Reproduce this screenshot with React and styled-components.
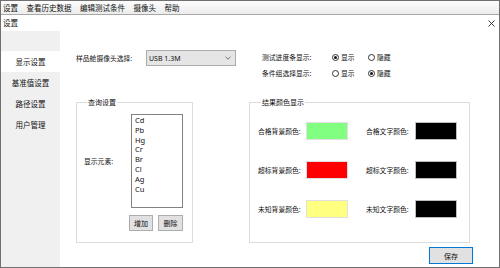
import React from 'react';
import styled, { createGlobalStyle } from 'styled-components';

const Global = createGlobalStyle`
  html, body { margin: 0; padding: 0; background: #fff; }
  body { font-family: "Noto Sans CJK SC", "Noto Sans", sans-serif; }
  * { box-sizing: border-box; }
`;

const Window = styled.div`
  width: 500px;
  height: 268px;
  border: 1px solid #707070;
  display: flex;
  flex-direction: column;
  background: #fff;
  overflow: hidden;
  font-size: 7.5px;
  line-height: 1;
  color: #111;
`;

const MenuBar = styled.div`
  height: 14px;
  flex: none;
  display: flex;
  align-items: center;
  gap: 8.5px;
  padding-left: 2px;
  background: linear-gradient(#fdfdfd, #ececec);
  border-bottom: 1px solid #a8a8a8;
`;

const MenuItem = styled.span`
  font-size: 7.5px;
`;

const TitleRow = styled.div`
  height: 16px;
  flex: none;
  display: flex;
  align-items: center;
  justify-content: space-between;
  padding: 0 4px 0 2px;
`;

const Body = styled.div`
  flex: 1;
  display: flex;
  min-height: 0;
`;

const Nav = styled.div`
  width: 59px;
  flex: none;
  background: #f0f0f0;
  padding-top: 20px;
  display: flex;
  flex-direction: column;
`;

const NavItem = styled.div`
  height: 21px;
  display: flex;
  align-items: center;
  justify-content: center;
  background: ${(p) => (p.$active ? '#fff' : 'transparent')};
`;

const Content = styled.div`
  flex: 1;
  display: flex;
  flex-direction: column;
  padding: 19px 0 0 16px;
  font-size: 6.8px;
`;

const TopRow = styled.div`
  display: flex;
  gap: 26px;
  height: 32px;
`;

const FieldRow = styled.div`
  display: flex;
  align-items: center;
  height: 16px;
`;

const Label = styled.span`
  width: ${(p) => p.$w}px;
  flex: none;
`;

const Select = styled.div`
  width: 90px;
  height: 16px;
  background: #e5e5e5;
  border: 1px solid #acacac;
  display: flex;
  align-items: center;
  justify-content: space-between;
  padding: 0 4px 0 2px;
  font-family: "Noto Sans", sans-serif;
  font-size: 7px;
`;

const RightCol = styled.div`
  display: flex;
  flex-direction: column;
  margin-top: -1px;
`;

const RadioOption = styled.label`
  width: 36px;
  display: flex;
  align-items: center;
  gap: 2px;
`;

const RadioCircle = styled.span`
  width: 7px;
  height: 7px;
  border-radius: 50%;
  border: 1px solid #333;
  display: flex;
  align-items: center;
  justify-content: center;
  &::after {
    content: '';
    width: 3px;
    height: 3px;
    border-radius: 50%;
    background: ${(p) => (p.$checked ? '#111' : 'transparent')};
  }
`;

const GroupsRow = styled.div`
  display: flex;
  gap: 56px;
  margin-top: 15px;
`;

const Group = styled.fieldset`
  margin: 0;
  padding: ${(p) => p.$pad};
  width: ${(p) => p.$w}px;
  height: 146px;
  border: 1px solid #dcdcdc;
  min-width: 0;
`;

const Legend = styled.legend`
  padding: 0 1px;
  margin-left: 3px;
  line-height: 10px;
  font-size: 7px;
`;

const ElemRow = styled.div`
  display: flex;
  align-items: center;
`;

const ListBox = styled.div`
  width: 52px;
  height: 94px;
  border: 1px solid #828282;
  padding: 1px 3px;
  display: flex;
  flex-direction: column;
  font-family: "Noto Sans", sans-serif;
  font-size: 7.5px;
`;

const ListItem = styled.div`
  height: 9.8px;
  line-height: 9.8px;
`;

const ButtonRow = styled.div`
  display: flex;
  justify-content: flex-end;
  gap: 5px;
  margin-top: 7px;
`;

const Button = styled.button`
  width: ${(p) => p.$w}px;
  height: ${(p) => p.$h || 16}px;
  background: #e1e1e1;
  border: 1px solid ${(p) => (p.$primary ? '#0078d7' : '#adadad')};
  font-family: inherit;
  font-size: 7px;
  color: #111;
  padding: 0;
  display: flex;
  align-items: center;
  justify-content: center;
`;

const ColorGrid = styled.div`
  display: grid;
  grid-template-columns: 48px 42px 18px 49px 42px;
  grid-auto-rows: 18px;
  row-gap: 21px;
  align-items: center;
`;

const Swatch = styled.div`
  width: 42px;
  height: 18px;
  background: ${(p) => p.$color};
  border: 1px solid ${(p) => (p.$color === '#000000' ? '#bdbdbd' : '#e0e0e0')};
`;

const Footer = styled.div`
  display: flex;
  justify-content: flex-end;
  padding-right: 26px;
  margin-top: 4px;
`;

const CloseIcon = () => (
  <svg width="7" height="7" viewBox="0 0 7 7">
    <path d="M0.5 0.5 L6.5 6.5 M6.5 0.5 L0.5 6.5" stroke="#222" strokeWidth="0.9" />
  </svg>
);

const Chevron = () => (
  <svg width="6" height="4" viewBox="0 0 6 4">
    <path d="M0.5 0.8 L3 3.2 L5.5 0.8" stroke="#555" strokeWidth="0.8" fill="none" />
  </svg>
);

const Radio = ({ checked, children }) => (
  <RadioOption>
    <RadioCircle $checked={checked} />
    <span>{children}</span>
  </RadioOption>
);

const menus = ['设置', '查看历史数据', '编辑测试条件', '摄像头', '帮助'];
const navs = ['显示设置', '基准值设置', '路径设置', '用户管理'];
const elements = ['Cd', 'Pb', 'Hg', 'Cr', 'Br', 'Cl', 'Ag', 'Cu'];
const colors = [
  ['合格背景颜色:', '#80ff80', '合格文字颜色:', '#000000'],
  ['超标背景颜色:', '#ff0000', '超标文字颜色:', '#000000'],
  ['未知背景颜色:', '#ffff80', '未知文字颜色:', '#000000'],
];

export default function App() {
  return (
    <>
      <Global />
      <Window>
        <MenuBar>
          {menus.map((m) => (
            <MenuItem key={m}>{m}</MenuItem>
          ))}
        </MenuBar>
        <TitleRow>
          <span>设置</span>
          <CloseIcon />
        </TitleRow>
        <Body>
          <Nav>
            {navs.map((n, i) => (
              <NavItem key={n} $active={i === 0}>
                {n}
              </NavItem>
            ))}
          </Nav>
          <Content>
            <TopRow>
              <FieldRow>
                <Label $w={70}>样品舱摄像头选择:</Label>
                <Select>
                  <span>USB 1.3M</span>
                  <Chevron />
                </Select>
              </FieldRow>
              <RightCol>
                <FieldRow>
                  <Label $w={70}>测试进度条显示:</Label>
                  <Radio checked>显示</Radio>
                  <Radio>隐藏</Radio>
                </FieldRow>
                <FieldRow>
                  <Label $w={70}>条件组选择显示:</Label>
                  <Radio>显示</Radio>
                  <Radio checked>隐藏</Radio>
                </FieldRow>
              </RightCol>
            </TopRow>
            <GroupsRow>
              <Group $w={117} $pad="7px 9px 0 7px">
                <Legend>查询设置</Legend>
                <ElemRow>
                  <Label $w={47}>显示元素:</Label>
                  <ListBox>
                    {elements.map((e) => (
                      <ListItem key={e}>{e}</ListItem>
                    ))}
                  </ListBox>
                </ElemRow>
                <ButtonRow>
                  <Button $w={24}>增加</Button>
                  <Button $w={25}>删除</Button>
                </ButtonRow>
              </Group>
              <Group $w={221} $pad="15px 13px 0 8px">
                <Legend>结果颜色显示</Legend>
                <ColorGrid>
                  {colors.map(([l1, c1, l2, c2]) => (
                    <React.Fragment key={l1}>
                      <span>{l1}</span>
                      <Swatch $color={c1} />
                      <span />
                      <span>{l2}</span>
                      <Swatch $color={c2} />
                    </React.Fragment>
                  ))}
                </ColorGrid>
              </Group>
            </GroupsRow>
            <Footer>
              <Button $w={44} $h={17} $primary>
                保存
              </Button>
            </Footer>
          </Content>
        </Body>
      </Window>
    </>
  );
}
